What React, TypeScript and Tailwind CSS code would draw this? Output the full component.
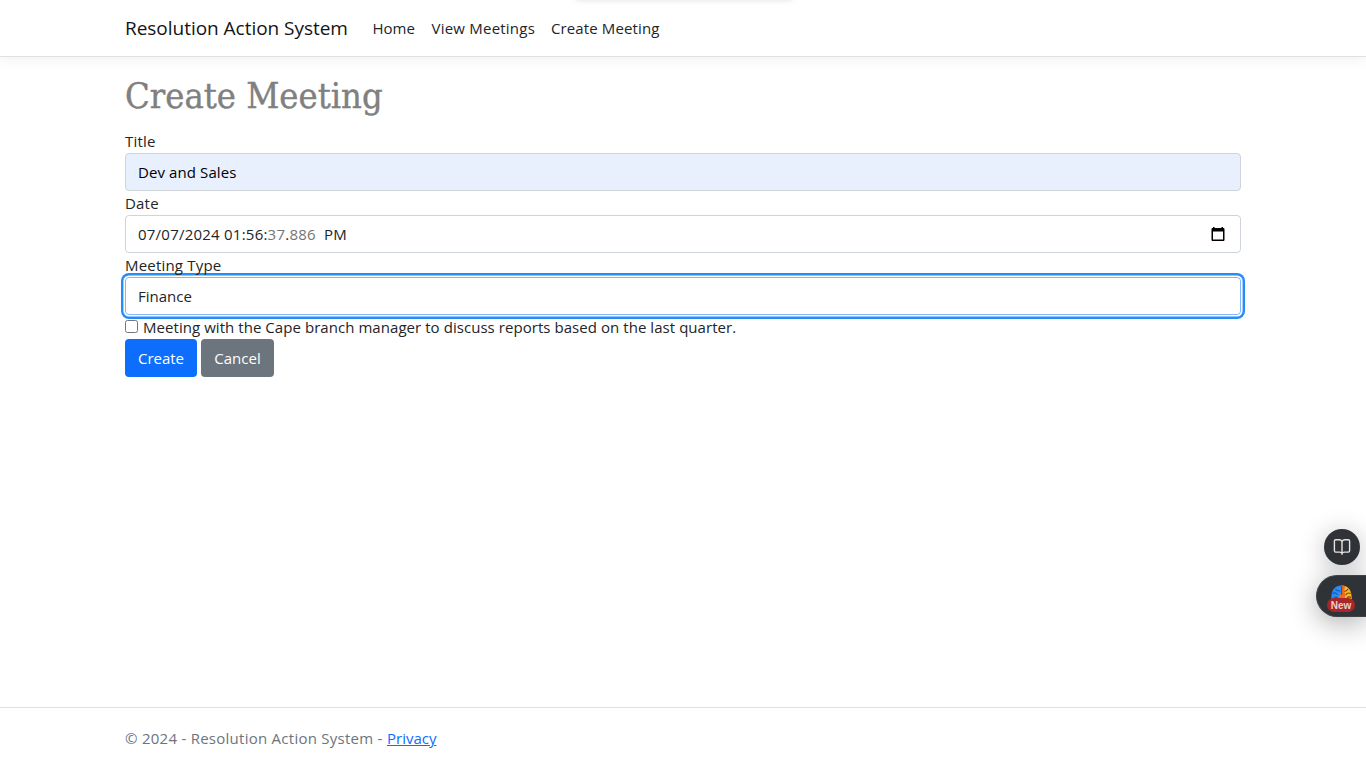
import type { ReactNode } from 'react';

function Header() {
  return (
    <header className="h-[57px] shrink-0 border-b border-[#dee2e6] bg-white shadow-[0_4px_12px_rgba(0,0,0,0.05)]">
      <nav className="mx-auto flex h-14 w-[1116px] items-center">
        <a className="mr-4 w-[231.5px] whitespace-nowrap text-[19px] leading-[30px] tracking-[-0.03px] text-[#121416]">Resolution Action System</a>
        <div className="flex whitespace-nowrap text-[15px] leading-6 text-[#212529]">
          <a className="w-[59px]">Home</a>
          <a className="w-[119.5px] tracking-[0.22px]">View Meetings</a>
          <a className="tracking-[0.12px]">Create Meeting</a>
        </div>
      </nav>
    </header>
  );
}

function Field({ label, className, children }: { label: string; className: string; children: ReactNode }) {
  return (
    <div>
      <label className="block h-6 leading-6 tracking-[0.2px]">{label}</label>
      <div className={`flex h-[38px] items-center rounded-[4px] border px-3 ${className}`}>{children}</div>
    </div>
  );
}

function CalendarIcon() {
  return (
    <svg className="ml-auto mr-[3px] h-[14px] w-[14px]" viewBox="0 0 14 14">
      <path fill="#000" fillRule="evenodd" d="M2 0h1.500v1h7V0H12v1h.3c.6 0 1.200.5 1.200 1.200v10.500c0 .7-.5 1.300-1.200 1.300H1.700C1 14 .5 13.400.5 12.700V2.200C.5 1.500 1 1 1.700 1H2zM2 4.500v8h10v-8z" />
    </svg>
  );
}

function SideWidgets() {
  return (
    <div className="absolute right-0 top-[529px] flex flex-col items-end gap-[10px]">
      <div className="mr-[6px] flex h-9 w-9 items-center justify-center rounded-full bg-[#2f3337] shadow-[0_4px_26px_rgba(0,0,0,0.26)]">
        <svg className="h-[18px] w-[18px]" viewBox="0 0 18 18" fill="none" stroke="#e6e3df" strokeWidth="1.4" strokeLinejoin="round" strokeLinecap="round">
          <path d="M9 3.600C8.400 2.200 7.500 1.700 6.200 1.700H2.700c-.8 0-1.300.5-1.300 1.300v9.800c0 .8.5 1.300 1.300 1.300h4c1.100 0 1.800.4 2.300 1.200.5-.8 1.200-1.200 2.300-1.200h4c.8 0 1.300-.5 1.300-1.300V3c0-.8-.5-1.300-1.300-1.300h-3.500C10.500 1.700 9.600 2.200 9 3.600zM9 3.600V16.300" />
        </svg>
      </div>
      <div className="relative h-[42px] w-[50px] rounded-l-[21px] border border-r-0 border-[#3e4246] bg-[#2f3337] shadow-[0_6px_28px_rgba(0,0,0,0.32)]">
        <svg className="absolute left-[13px] top-[9px] h-[18px] w-[23px]" viewBox="0 0 23 18">
          <path fill="#2b8df2" d="M11.500.5C6 .3 2 4 1.500 10.500L1.200 14l3 3h7.300z" />
          <path fill="#f9b91d" d="M11.500.5C17 .3 21 4 21.500 10.500l.3 3.500-3 3h-7.300z" />
          <path fill="#ef6a24" d="M11.500.5c1.500 0 2.500.2 3.500.6l-.8 5.400 1.300 3.500L14 16h-2.500zM11.500 8v8H8.300l.7-5z" />
          <path fill="none" stroke="#1558b8" strokeWidth="1.100" d="M2.500 8.500c2.200-1.300 4.500-.6 5 1.500M5.500 4c1 1.800 2.500 2.500 5 1.800M4 13c1-1 2.600-1 3.800.2" />
          <path fill="none" stroke="#7d431b" strokeWidth="1.100" d="M20.800 8.500c-2.200-1-4.300-.3-5 1.500M18 4c-.8 1.500-2.200 2.300-3.800 2.500M21 12.500c-1.500-1-3-.7-4 .6M11.600.8v9" />
        </svg>
        <span className="absolute left-[10px] top-[22px] flex h-[14px] w-[28px] items-center justify-center rounded-full bg-[#a92529] pt-px font-['Liberation_Sans',sans-serif] text-[10px] font-bold leading-none text-[#e9d2cd]">New</span>
      </div>
    </div>
  );
}

export default function App() {
  return (
    <div className="relative flex h-screen flex-col overflow-hidden bg-white font-['Open_Sans',sans-serif] text-[15px] leading-6 text-[#212529]">
      <Header />
      <div className="absolute left-[574px] top-[-10px] h-[10px] w-[220px] rounded-lg shadow-[0_0_6px_rgba(0,0,0,0.12)]" />
      <main className="mx-auto mt-4 w-[1116px] grow">
        <h1 className="mb-2 h-12 whitespace-nowrap font-['DejaVu_Serif_Condensed','DejaVu_Serif',serif] text-[36px] leading-[45px] text-[#808080] [-webkit-text-stroke:0.4px_#808080] [font-stretch:condensed]">Create Meeting</h1>
        <Field label="Title" className="border-[#ced4da] bg-[#e8f0fe] text-black">
          <span className="tracking-[0.1px]">Dev and Sales</span>
        </Field>
        <Field label="Date" className="border-[#ced4da] bg-white">
          <span className="whitespace-pre tracking-[0.23px]">07/07/2024 01:56:<span className="text-[#757575]">37</span>.<span className="text-[#757575]">886</span>{'  '}PM</span>
          <CalendarIcon />
        </Field>
        <Field label="Meeting Type" className="border-[#86b7fe] bg-white shadow-[0_0_0_1.6px_#fff,0_0_0_4px_#258cfb]">
          <span>Finance</span>
        </Field>
        <div className="flex h-6 items-center whitespace-nowrap">
          <span className="mb-[2px] mr-[5px] h-[13px] w-[13px] rounded-[2.5px] border border-[#767676] bg-white" />
          <span className="tracking-[0.055px]">Meeting with the Cape branch manager to discuss reports based on the last quarter.</span>
        </div>
        <div className="flex gap-1 text-white">
          <button className="h-[38px] w-[72px] rounded-[4px] bg-[#0d6efd]">Create</button>
          <button className="h-[38px] w-[73px] rounded-[4px] bg-[#6c757d]">Cancel</button>
        </div>
      </main>
      <footer className="h-[61px] shrink-0 border-t border-[#dee2e6] text-[#6c757d]">
        <div className="mx-auto flex w-[1116px] whitespace-pre leading-[60px]">
          <span className="w-[262px] tracking-[0.26px]">© 2024 - Resolution Action System - </span>
          <a className="text-[#0d6efd] underline">Privacy</a>
        </div>
      </footer>
      <SideWidgets />
    </div>
  );
}
